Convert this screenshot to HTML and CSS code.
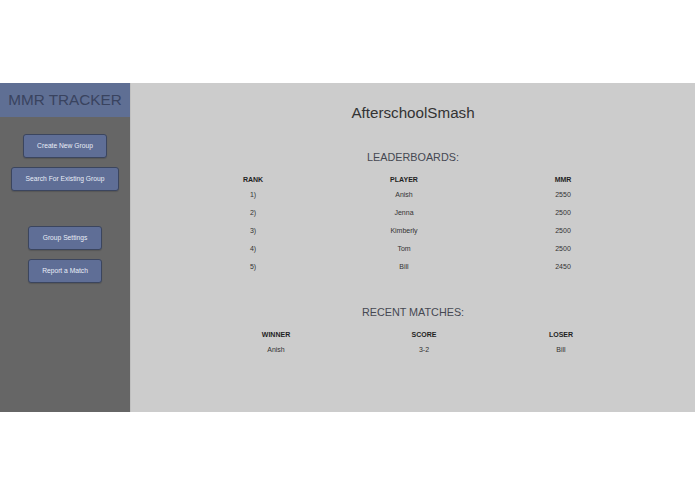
FILE: index.html
```html
<!DOCTYPE html>
<html>
<head>
<meta charset="utf-8">
<link rel="stylesheet" href="styles.css">
</head>
<body>
<div class="app">
  <aside class="sidebar">
    <div class="brand">MMR TRACKER</div>
    <div class="btn-group first">
      <button class="btn">Create New Group</button>
      <button class="btn">Search For Existing Group</button>
    </div>
    <div class="btn-group second">
      <button class="btn">Group Settings</button>
      <button class="btn">Report a Match</button>
    </div>
  </aside>
  <main class="main">
    <h1 class="title">AfterschoolSmash</h1>
    <h2 class="section-title">LEADERBOARDS:</h2>
    <div class="table leaderboard">
      <div class="th">RANK</div><div class="th">PLAYER</div><div class="th">MMR</div>
      <div class="td">1)</div><div class="td">Anish</div><div class="td">2550</div>
      <div class="td">2)</div><div class="td">Jenna</div><div class="td">2500</div>
      <div class="td">3)</div><div class="td">Kimberly</div><div class="td">2500</div>
      <div class="td">4)</div><div class="td">Tom</div><div class="td">2500</div>
      <div class="td">5)</div><div class="td">Bill</div><div class="td">2450</div>
    </div>
    <h2 class="section-title recent-title">RECENT MATCHES:</h2>
    <div class="table matches">
      <div class="th">WINNER</div><div class="th">SCORE</div><div class="th">LOSER</div>
      <div class="td">Anish</div><div class="td">3-2</div><div class="td">Bill</div>
    </div>
  </main>
</div>
</body>
</html>
```

FILE: styles.css
```css
html, body {
  margin: 0;
  padding: 0;
  background: #ffffff;
  font-family: "Liberation Sans", Arial, sans-serif;
}

.app {
  margin-top: 83px;
  height: 329px;
  display: flex;
}

.sidebar {
  width: 130px;
  flex: none;
  background: #666666;
  display: flex;
  flex-direction: column;
  align-items: center;
}

.brand {
  align-self: stretch;
  height: 34px;
  background: #5f6f94;
  color: #39435f;
  font-size: 15.3px;
  line-height: 34px;
  text-align: center;
}

.btn-group {
  display: flex;
  flex-direction: column;
  align-items: center;
  gap: 9px;
}

.btn-group.first {
  margin-top: 17px;
}

.btn-group.second {
  margin-top: 35px;
}

.btn {
  height: 24px;
  padding: 0 13.5px;
  background: #5f6e96;
  border: 1px solid #3b455e;
  border-radius: 3px;
  color: #e9edf6;
  font-family: "Liberation Sans", Arial, sans-serif;
  font-size: 6.7px;
  line-height: 22px;
  white-space: nowrap;
  box-shadow: 0 1px 1px rgba(0, 0, 0, 0.15);
}

.main {
  flex: 1;
  background: #cccccc;
  border-left: 1px solid #c0c0c0;
  display: flex;
  flex-direction: column;
  align-items: center;
  padding-top: 20px;
}

.title {
  margin: 0;
  font-size: 15.2px;
  font-weight: normal;
  line-height: 20px;
  color: #333333;
}

.section-title {
  margin: 26px 0 0;
  font-size: 10.8px;
  font-weight: normal;
  line-height: 16px;
  color: #454852;
}

.recent-title {
  margin-top: 28px;
}

.table {
  display: grid;
  grid-auto-rows: 18px;
  justify-items: center;
  align-items: center;
  margin-top: 8.5px;
  font-size: 7px;
}

.leaderboard {
  grid-template-columns: 80px 222px 96px;
  margin-left: -2px;
}

.matches {
  grid-template-columns: 80px 216px 58px;
  margin-top: 9.5px;
}

.th {
  height: 12px;
  line-height: 12px;
  font-weight: bold;
  color: #1f1f1f;
  align-self: start;
}

.table .th {
  grid-row: 1;
}

.td {
  color: #333333;
  line-height: 18px;
}

.leaderboard, .matches {
  grid-template-rows: 12px;
}
```
